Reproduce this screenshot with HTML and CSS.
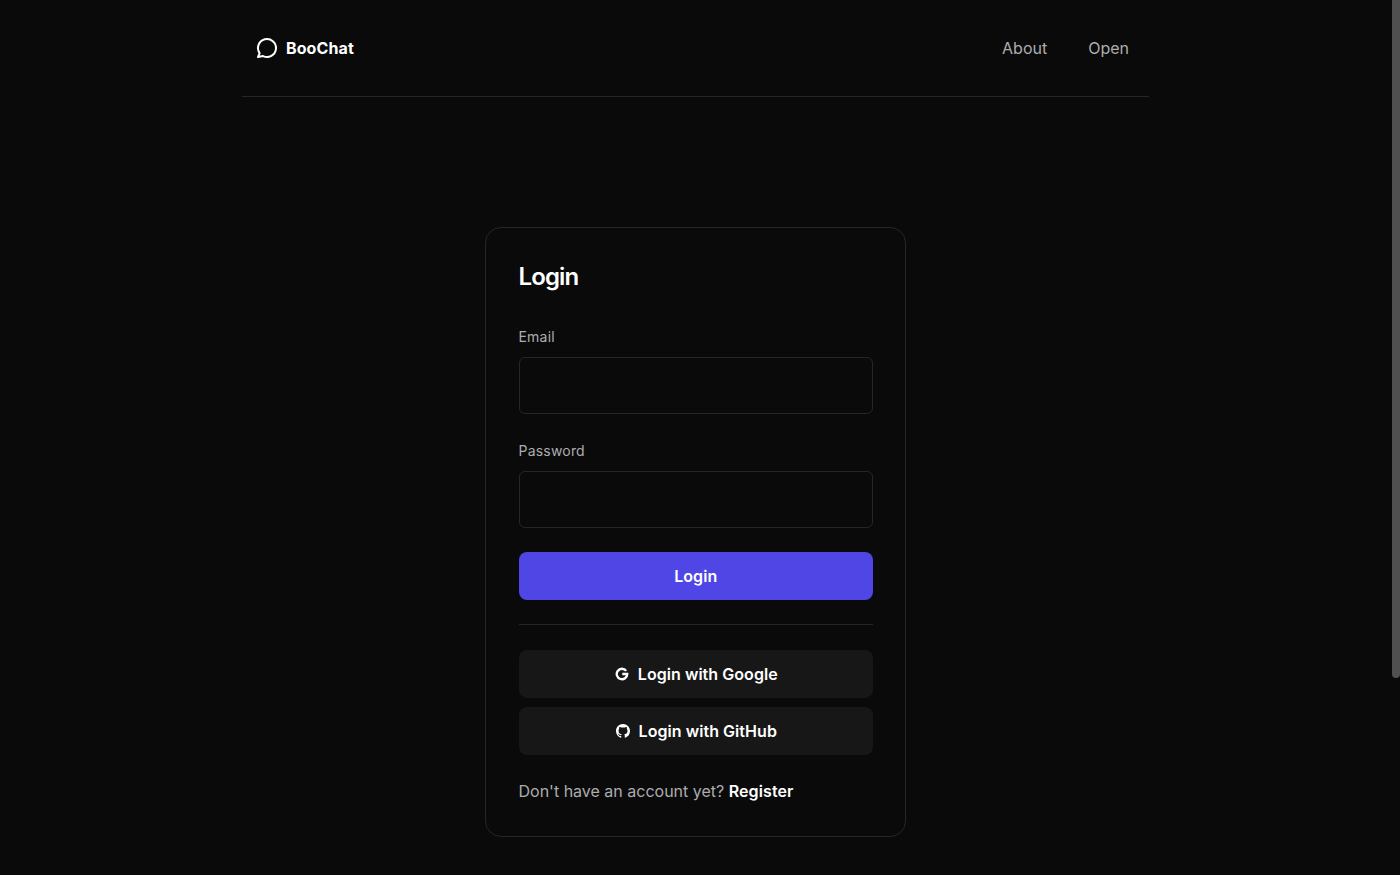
FILE: index.html
```html
<!DOCTYPE html>
<html lang="en">
<head>
<meta charset="utf-8">
<title>BooChat</title>
<link rel="stylesheet" href="styles.css">
</head>
<body>
<div class="page">
  <header class="topbar">
    <a class="brand" href="#">
      <svg class="brand-icon" viewBox="0 0 24 24" fill="none" stroke="currentColor" stroke-width="2" stroke-linecap="round" stroke-linejoin="round"><path d="M3 21l1.65-3.8a9 9 0 1 1 3.4 2.9L3 21"/></svg>
      <span>BooChat</span>
    </a>
    <nav class="nav">
      <a href="#">About</a>
      <a href="#">Open</a>
    </nav>
  </header>
  <main class="content">
    <section class="card">
      <h1 class="title">Login</h1>
      <form class="form">
        <div class="field">
          <label class="label" for="email">Email</label>
          <input class="input" id="email" type="email">
        </div>
        <div class="field">
          <label class="label" for="password">Password</label>
          <input class="input" id="password" type="password">
        </div>
        <button class="btn btn-primary" type="button">Login</button>
        <hr class="divider">
        <div class="socials">
          <button class="btn btn-social" type="button">
            <svg class="social-icon google" viewBox="0 0 24 24" fill="none" stroke="currentColor" stroke-width="4" stroke-linecap="butt" stroke-linejoin="miter"><path d="M19.2 6.6A9 9 0 1 0 21 12h-8.5"/></svg>
            <span>Login with Google</span>
          </button>
          <button class="btn btn-social" type="button">
            <svg class="social-icon" viewBox="0 0 16 16" fill="currentColor"><path d="M8 0C3.58 0 0 3.58 0 8c0 3.54 2.29 6.53 5.47 7.59.4.07.55-.17.55-.38 0-.19-.01-.82-.01-1.49-2.01.37-2.53-.49-2.69-.94-.09-.23-.48-.94-.82-1.13-.28-.15-.68-.52-.01-.53.63-.01 1.08.58 1.23.82.72 1.21 1.87.87 2.33.66.07-.52.28-.87.51-1.07-1.78-.2-3.64-.89-3.64-3.95 0-.87.31-1.59.82-2.15-.08-.2-.36-1.02.08-2.12 0 0 .67-.21 2.2.82.64-.18 1.32-.27 2-.27s1.36.09 2 .27c1.53-1.04 2.2-.82 2.2-.82.44 1.1.16 1.92.08 2.12.51.56.82 1.27.82 2.15 0 3.07-1.87 3.75-3.65 3.95.29.25.54.73.54 1.48 0 1.07-.01 1.93-.01 2.2 0 .21.15.46.55.38A8.01 8.01 0 0 0 16 8c0-4.42-3.58-8-8-8z"/></svg>
            <span>Login with GitHub</span>
          </button>
        </div>
      </form>
      <p class="footnote">Don't have an account yet? <a href="#">Register</a></p>
    </section>
  </main>
</div>
<div class="scrollbar"><div class="scrollbar-thumb"></div></div>
</body>
</html>
```
FILE: styles.css
```css
* { box-sizing: border-box; }
html, body { height: 100%; }
body {
  margin: 0;
  overflow: hidden;
  background: #0a0a0b;
  color: #fff;
  font-family: Inter, "Liberation Sans", sans-serif;
  font-size: 16px;
}
a { color: inherit; text-decoration: none; }
.page {
  width: 907px;
  margin-left: 242px;
}
.topbar {
  height: 97px;
  padding: 0 20px 0 14px;
  border-bottom: 1px solid #262626;
  display: flex;
  align-items: center;
  justify-content: space-between;
}
.brand {
  display: flex;
  align-items: center;
  gap: 7px;
  font-weight: 700;
  letter-spacing: 0.1px;
  color: #fff;
}
.brand-icon { width: 24px; height: 24px; display: block; margin-left: -1px; }
.nav {
  display: flex;
  gap: 41px;
  color: #adadad;
  font-weight: 400;
}
.content {
  display: flex;
  justify-content: center;
  padding-top: 130px;
}
.card {
  width: 421.5px;
  height: 610px;
  border: 1px solid #262626;
  border-radius: 16px;
  padding: 32px 32.25px 32px 32.75px;
}
.title {
  margin: 1px 0 0;
  font-size: 24px;
  line-height: 32px;
  font-weight: 600;
  letter-spacing: -0.9px;
}
.form {
  display: flex;
  flex-direction: column;
  margin-top: 34px;
}
.field { display: flex; flex-direction: column; margin-bottom: 27px; }
.field + .field { margin-bottom: 24px; }
.label {
  font-size: 14px;
  line-height: 20px;
  letter-spacing: 0.2px;
  color: #adadad;
  margin-bottom: 10px;
}
.input {
  height: 57px;
  background: transparent;
  border: 1px solid #262626;
  border-radius: 6px;
  color: #fff;
  outline: none;
  padding: 0 12px;
}
.btn {
  height: 48px;
  border: 0;
  border-radius: 8px;
  font-family: inherit;
  font-size: 16px;
  font-weight: 600;
  letter-spacing: 0.05px;
  color: #fff;
  display: flex;
  align-items: center;
  justify-content: center;
  width: 100%;
}
.btn-primary { background: #4f46e5; }
.divider {
  width: 100%;
  margin: 24px 0 25px;
  border: 0;
  border-top: 1px solid #262626;
}
.socials { display: flex; flex-direction: column; gap: 9px; }
.btn-social { background: #171717; gap: 9px; padding: 0 0 0 1px; }
.social-icon { width: 14px; height: 14px; display: block; }
.footnote {
  margin: 24px 0 0;
  line-height: 24px;
  color: #adadad;
}
.footnote a { color: #fff; font-weight: 600; letter-spacing: 0.1px; }
.scrollbar {
  position: fixed;
  top: 0;
  right: 0;
  bottom: 0;
  width: 8px;
  background: #0a0a0b;
}
.scrollbar-thumb {
  height: 678px;
  background: #505050;
  border-radius: 0 0 4px 4px;
}
```
